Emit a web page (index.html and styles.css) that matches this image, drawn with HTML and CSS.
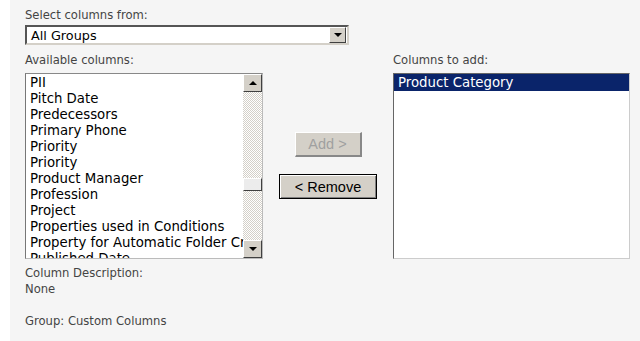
FILE: index.html
```html
<!DOCTYPE html>
<html lang="en">
<head>
  <meta charset="UTF-8">
  <title>Add Columns</title>
  <link rel="stylesheet" href="styles.css">
</head>
<body>
  <div class="panel">
    <div class="label">Select columns from:</div>
    <div class="dropdown">
      <span class="dropdown-text">All Groups</span>
      <span class="arrow-btn"><span class="tri-down"></span></span>
    </div>

    <div class="columns">
      <div class="col-left">
        <div class="label col-label">Available columns:</div>
        <div class="listbox avail">
          <div class="items">
            <div class="item">PII</div>
            <div class="item">Pitch Date</div>
            <div class="item">Predecessors</div>
            <div class="item">Primary Phone</div>
            <div class="item">Priority</div>
            <div class="item">Priority</div>
            <div class="item">Product Manager</div>
            <div class="item">Profession</div>
            <div class="item">Project</div>
            <div class="item">Properties used in Conditions</div>
            <div class="item">Property for Automatic Folder Creation</div>
            <div class="item">Published Date</div>
          </div>
          <div class="scrollbar">
            <span class="arrow-btn sb-btn"><span class="tri-up"></span></span>
            <div class="track"><span class="thumb"></span></div>
            <span class="arrow-btn sb-btn"><span class="tri-down"></span></span>
          </div>
        </div>
      </div>

      <div class="col-mid">
        <button class="btn add" disabled>Add &gt;</button>
        <button class="btn remove">&lt; Remove</button>
      </div>

      <div class="col-right">
        <div class="label col-label">Columns to add:</div>
        <div class="listbox chosen">
          <div class="item selected">Product Category</div>
        </div>
      </div>
    </div>

    <div class="desc">
      <div>Column Description:</div>
      <div>None</div>
      <div class="group">Group: Custom Columns</div>
    </div>
  </div>
</body>
</html>
```

FILE: styles.css
```css
body {
  margin: 0;
  background: #fff;
  font-family: "DejaVu Sans", Verdana, sans-serif;
}
.panel {
  margin-left: 10px;
  height: 341px;
  background: #f5f5f5;
  padding: 8px 0 0 15px;
  box-sizing: border-box;
  color: #444;
  font-size: 11.6px;
}
.label {
  height: 17px;
  line-height: 14px;
}
.col-label {
  height: 20px;
}
.dropdown {
  width: 324px;
  height: 20px;
  box-sizing: border-box;
  background: #fff;
  border: 2px solid;
  border-color: #555 #d4d0c8 #d4d0c8 #555;
  display: flex;
  align-items: center;
  justify-content: space-between;
  padding: 0 1px 0 4px;
  margin-bottom: 8px;
}
.dropdown-text {
  color: #000;
  font-size: 12.8px;
}
.arrow-btn {
  display: flex;
  align-items: center;
  justify-content: center;
  width: 17px;
  height: 16px;
  box-sizing: border-box;
  background: #d4d0c8;
  border: 1px solid;
  border-color: #fff #404040 #404040 #fff;
}
.tri-down, .tri-up {
  width: 0;
  height: 0;
  border-left: 4px solid transparent;
  border-right: 4px solid transparent;
}
.tri-down { border-top: 4px solid #000; }
.tri-up { border-bottom: 4px solid #000; }

.columns {
  display: flex;
  align-items: flex-start;
}
.col-left { width: 238px; }
.listbox {
  height: 186px;
  box-sizing: border-box;
  background: #fff;
  border: 1px solid;
  border-color: #666 #ccc #ccc #666;
  overflow: hidden;
}
.avail {
  display: flex;
  border-color: #888 #bbb #bbb #777;
}
.items {
  flex: 1;
  overflow: hidden;
  padding-top: 1px;
  font-size: 13.3px;
  color: #000;
  white-space: nowrap;
}
.item {
  height: 16px;
  line-height: 16px;
  padding-left: 4px;
}
.scrollbar {
  width: 19px;
  display: flex;
  flex-direction: column;
}
.sb-btn {
  width: 19px;
  height: 18px;
}
.track {
  flex: 1;
  background: repeating-conic-gradient(#d4d0c8 0 25%, #fff 0 50%) 0 0 / 2px 2px;
  padding-top: 86px;
}
.thumb {
  display: block;
  height: 13px;
  box-sizing: border-box;
  background: #ececec;
  border: 1px solid;
  border-color: #fff #404040 #404040 #fff;
}

.col-mid {
  width: 130px;
  display: flex;
  flex-direction: column;
  align-items: center;
  padding-top: 79px;
  gap: 17px;
}
.btn {
  font-family: "Liberation Sans", Arial, sans-serif;
  font-size: 14.5px;
  height: 25px;
  background: #d4d0c8;
  padding: 0 6px;
  color: #000;
}
.btn.add {
  width: 67px;
  color: #a0a0a0;
  border-color: #fff #888 #888 #fff;
  border-width: 1px 2px 2px 1px;
  border-style: solid;
}
.btn.remove {
  width: 98px;
  border: 1px solid #000;
  box-shadow: inset 1px 1px 0 #fff, inset -1px -1px 0 #808080;
}

.chosen {
  width: 237px;
  font-size: 13.3px;
}
.selected {
  background: #0a246a;
  color: #fff;
  height: 17px;
  line-height: 17px;
  padding-left: 4px;
}

.desc {
  margin-top: 6px;
  line-height: 16px;
}
.group { margin-top: 16px; }
```
